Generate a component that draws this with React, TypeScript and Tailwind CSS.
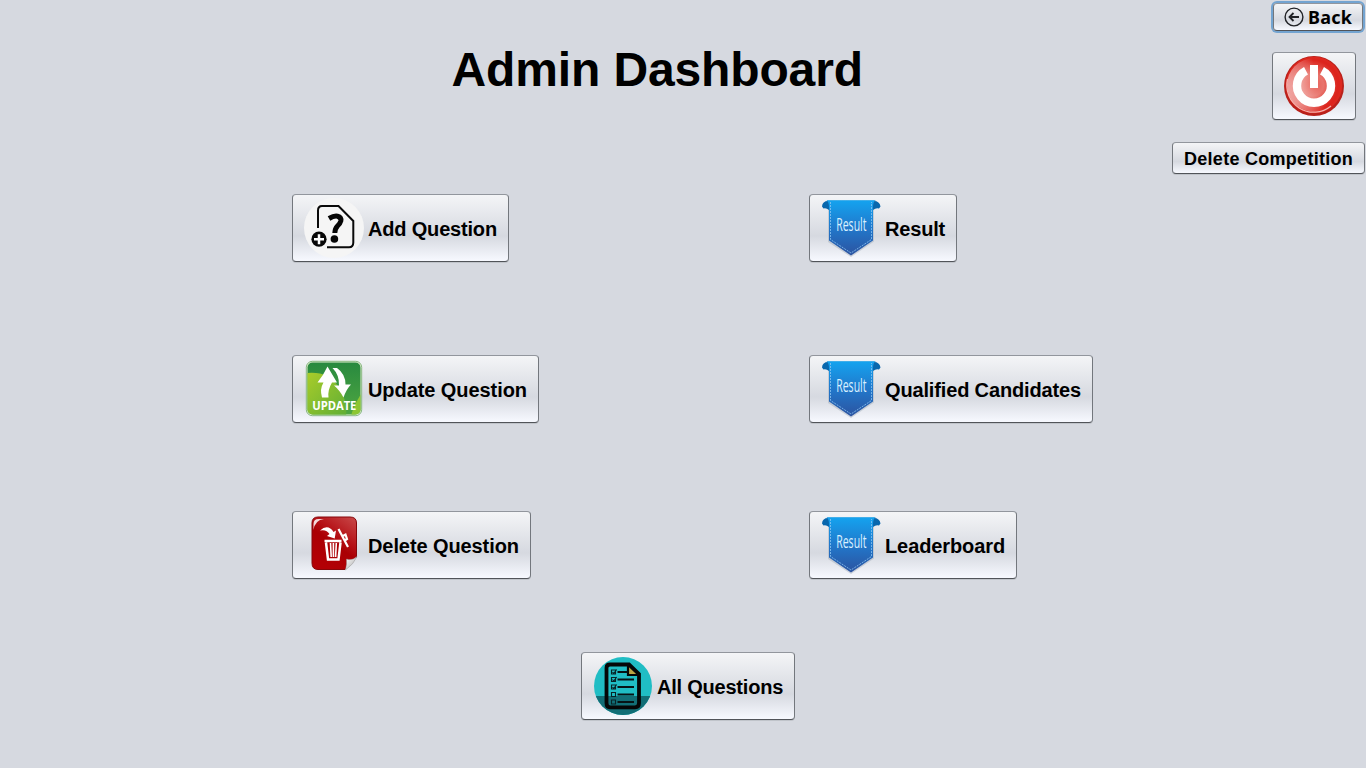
import type { ReactNode } from 'react';

function AddIcon() {
  return (
    <svg width="60" height="60" viewBox="0 0 60 60" className="shrink-0">
      <circle cx="30" cy="30" r="30" fill="#f5f5f5" />
      <path d="M14 30V12.500Q14 8 18 8H34.500L49.300 23V44.500Q49.300 49.300 45 49.300H23" fill="none" stroke="#0a0a0a" strokeWidth="2" />
      <path d="M25 20.500Q30 17.500 33.500 18.200Q37.500 19.200 36.800 23Q36.200 25.500 33.500 28Q31 30.500 30.800 35" fill="none" stroke="#050505" strokeWidth="5" />
      <circle cx="30.400" cy="41" r="3.800" fill="#050505" />
      <circle cx="15" cy="41.200" r="7.600" fill="#080808" />
      <path d="M15 36.200v10M10 41.200h10" stroke="#fff" strokeWidth="2.500" />
    </svg>
  );
}

function UpdateIcon() {
  return (
    <svg width="60" height="60" viewBox="0 0 60 60" className="shrink-0">
      <defs>
        <linearGradient id="updateDark" x1="0" y1="0" x2="0" y2="1">
          <stop offset="0" stopColor="#28893f" />
          <stop offset="1" stopColor="#4fa741" />
        </linearGradient>
        <linearGradient id="updateLime" x1="0" y1="0" x2="1" y2="1">
          <stop offset="0" stopColor="#a9cc2a" />
          <stop offset="1" stopColor="#5fae35" />
        </linearGradient>
        <clipPath id="updateClip"><rect x="3.500" y="3.500" width="53" height="52" rx="5" /></clipPath>
      </defs>
      <rect x="2.300" y="2.300" width="55.400" height="54.400" rx="6" fill="#e4efd2" stroke="#70aa6b" strokeWidth=".8" />
      <g clipPath="url(#updateClip)">
        <rect x="3" y="3" width="54" height="53" fill="url(#updateDark)" />
        <path d="M3 14Q24 12 34 27Q44 42 42 57H3Z" fill="url(#updateLime)" />
        <path d="M57 35Q49 48 47 57H57Z" fill="#8dc633" />
      </g>
      <path d="M23.500 7.500L33 23.500H28Q23.500 31 24.500 38.500H18Q15.500 30 19.500 23.500H13.500Q19.500 16 23.500 7.500Z" fill="#fff" />
      <path d="M28.500 9H33Q41.500 15 41.500 25.500H47Q42.500 30 39.500 38.500Q35.500 31 30 26.500H35Q35.500 16 28.500 9Z" fill="#fff" />
      <text x="8.300" y="51" textLength="44" lengthAdjust="spacingAndGlyphs" fill="#fff" className="font-['Open_Sans',sans-serif] text-[12px] font-bold">UPDATE</text>
    </svg>
  );
}

function DeleteIcon() {
  return (
    <svg width="60" height="60" viewBox="0 0 60 60" className="shrink-0">
      <defs>
        <linearGradient id="deleteRed" x1="1" y1="0" x2=".4" y2="1">
          <stop offset="0" stopColor="#c94b4b" />
          <stop offset=".42" stopColor="#b61318" />
          <stop offset=".6" stopColor="#aa0004" />
          <stop offset="1" stopColor="#b30005" />
        </linearGradient>
        <linearGradient id="deleteFold" x1="0" y1="0" x2="1" y2="1">
          <stop offset="0" stopColor="#fff" />
          <stop offset="1" stopColor="#a9a9a9" />
        </linearGradient>
      </defs>
      <path d="M14 2H46Q52.500 2 52.500 8V42L41 54.500H14Q8 54.500 8 48V8Q8 2 14 2Z" fill="url(#deleteRed)" stroke="#86070a" />
      <path d="M9.500 15V9Q9.500 4 14.500 4H20Q11 5 9.500 15Z" fill="#fff" opacity=".85" />
      <path d="M41.500 55Q43 49 42.500 44Q48 46 53 41.500Q50 49 41.500 55Z" fill="url(#deleteFold)" stroke="#888" strokeWidth=".4" />
      <path d="M16 15.500Q24 8.500 29.500 17L32 15.500L30.700 23.500L23 21L25.500 19Q22.500 14 16 15.500Z" fill="#fff" />
      <path d="M34.500 14L44 32M38 21.500L41.500 19.500L43 24L40 26" fill="none" stroke="#fff" strokeWidth="2.200" />
      <path d="M20.500 26H37.500M22 27.500L24 44.500H34.500L36.500 27.500" fill="none" stroke="#fff" strokeWidth="2.500" />
      <path d="M26.500 28L27.200 42M29.400 28V42M32.300 28L31.600 42" stroke="#fff" strokeWidth="1.600" />
    </svg>
  );
}

function ResultIcon() {
  return (
    <svg width="60" height="60" viewBox="0 0 60 60" className="shrink-0">
      <defs>
        <linearGradient id="ribbonBlue" x1="0" y1="0" x2="0" y2="1">
          <stop offset="0" stopColor="#14a3ef" />
          <stop offset=".5" stopColor="#2178cb" />
          <stop offset="1" stopColor="#2c53a0" />
        </linearGradient>
      </defs>
      <path d="M6 2H55L53 12V43.500L30 59L7 44V12Z" fill="#a8b1bd" opacity=".5" />
      <path d="M8 3Q1.500 2.500 1 8.500L2.500 10.500Q5 9.500 8 12Z" fill="#0867ad" />
      <path d="M52 3Q58.500 2.500 59.500 8.500L58 10.500Q55 9.500 52 12Z" fill="#0867ad" />
      <path d="M5.500 2.300H54.500Q52 4 52 9V42.500L30 57.500L8 42.500V9Q8 4 5.500 2.300Z" fill="url(#ribbonBlue)" />
      <path d="M9.500 4V41.500L30 55L50.500 41.500V4" fill="none" stroke="#8bc5f3" strokeWidth=".8" strokeDasharray="2 1" />
      <g transform="translate(15.200 32.800) scale(.61 1)">
        <text fill="#d9f0ff" className="font-['Open_Sans',sans-serif] text-[17.300px] font-normal tracking-normal">Result</text>
      </g>
    </svg>
  );
}

function QuestionsIcon() {
  return (
    <svg width="60" height="60" viewBox="0 0 60 60" className="shrink-0">
      <defs><clipPath id="questionsClip"><circle cx="30" cy="30" r="29" /></clipPath></defs>
      <g clipPath="url(#questionsClip)">
        <rect width="60" height="60" fill="#20bdc4" />
        <rect y="40" width="60" height="20" fill="#126e76" />
      </g>
      <path d="M35 8V19H45Z" fill="#b9a544" />
      <path d="M17 8.500H36L46 18V47Q46 51.300 42 51.300H17Q13.500 51.300 13.500 47V12Q13.500 8.500 17 8.500Z" fill="none" stroke="#050707" strokeWidth="3.800" />
      <path d="M35 9V19H45" fill="none" stroke="#050707" strokeWidth="2.200" />
      <path d="M24.500 16H34.500M24.500 23.500H41M24.500 31H41M24.500 38.500H41M24.500 46H41" stroke="#071416" strokeWidth="1.800" />
      <path d="M18.500 14h4v4h-4zM18.500 21.500h4v4h-4zM18.500 29h4v4h-4zM18.500 36.500h4v4h-4zM18.500 44h4v4h-4zM19.500 16l1.200 1.500 3-4M19.500 23.500l1.200 1.500 3-4M19.500 31l1.200 1.500 3-4" fill="none" stroke="#082326" strokeWidth="1.100" />
    </svg>
  );
}

function PowerIcon() {
  return (
    <svg width="60" height="60" viewBox="0 0 60 60" className="shrink-0">
      <defs>
        <radialGradient id="powerRed" cx=".48" cy=".5" r=".52">
          <stop offset="0" stopColor="#e85b52" />
          <stop offset=".4" stopColor="#e8746c" />
          <stop offset=".9" stopColor="#dc251d" />
          <stop offset="1" stopColor="#dc241d" />
        </radialGradient>
        <linearGradient id="powerShine" x1="0" y1=".6" x2=".6" y2=".45">
          <stop offset="0" stopColor="#fff" stopOpacity=".6" />
          <stop offset="1" stopColor="#fff" stopOpacity="0" />
        </linearGradient>
      </defs>
      <circle cx="30" cy="30" r="30" fill="#b9211b" />
      <circle cx="30" cy="29" r="28.300" fill="#dd281f" />
      <circle cx="29.500" cy="29" r="26.500" fill="url(#powerRed)" />
      <circle cx="29.500" cy="29" r="26.500" fill="url(#powerShine)" />
      <path d="M3.500 23A27 27 0 0 0 47 50" fill="none" stroke="#f4b5b0" strokeWidth="1.200" />
      <path d="M22 14.700A17 17 0 1 0 38 14.700" fill="none" stroke="#fff" strokeWidth="8.400" />
      <path d="M26 9H34V32H26Z" fill="#fff" />
    </svg>
  );
}

const face =
  "flex shrink-0 items-center rounded-[4px] border border-t-[#92969d] border-x-[#73777d] border-b-[#515459] bg-linear-to-b from-[#f4f5f7] via-[#d6d9e0] via-62% to-[#f7f9ff] text-black whitespace-nowrap font-['Liberation_Sans',Arial,sans-serif] font-bold";

function MenuButton({ icon, label, className }: { icon: ReactNode; label: string; className: string }) {
  return (
    <button className={`${face} h-[68px] gap-1 pl-[11px] text-[20px] shadow-[0_1px_0_#c0c4ca] ${className}`}>
      {icon}
      <span className="pt-[2px]">{label}</span>
    </button>
  );
}

export default function App() {
  return (
    <div className="flex h-[768px] w-[1366px] overflow-hidden bg-[#d6d9e0] font-['Liberation_Sans',Arial,sans-serif]">
      <main className="flex w-[1172px] flex-col">
        <h1 className="mt-[43px] ml-[451.500px] h-[53px] text-[48px] leading-[54px] font-bold tracking-[-0.13px] whitespace-nowrap text-black">Admin Dashboard</h1>
        <div className="mt-[98px] ml-[292px] grid grid-cols-[517px_284px] grid-rows-[161px_156px_68px] items-start">
          <MenuButton icon={<AddIcon />} label="Add Question" className="w-[217px] tracking-[-0.18px]" />
          <MenuButton icon={<ResultIcon />} label="Result" className="w-[148px] tracking-[-0.18px]" />
          <MenuButton icon={<UpdateIcon />} label="Update Question" className="w-[247px] tracking-[-0.07px]" />
          <MenuButton icon={<ResultIcon />} label="Qualified Candidates" className="w-[284px] tracking-[-0.15px]" />
          <MenuButton icon={<DeleteIcon />} label="Delete Question" className="w-[239px] tracking-[-0.09px]" />
          <MenuButton icon={<ResultIcon />} label="Leaderboard" className="w-[208px] tracking-[-0.1px]" />
        </div>
        <div className="mt-[73px] ml-[581px]">
          <MenuButton icon={<QuestionsIcon />} label="All Questions" className="w-[214px] tracking-[-0.22px]" />
        </div>
      </main>
      <aside className="flex w-[194px] flex-col">
        <button className={`${face} mt-[3px] ml-[101px] h-[28px] w-[90px] pl-[10px] ring-2 ring-[#73a4d1]`}>
          <svg width="20" height="20" viewBox="0 0 20 20" fill="none" stroke="#202226" className="mb-px shrink-0">
            <circle cx="10" cy="10" r="8.900" strokeWidth="1.400" />
            <path d="M15 10H6M9.500 6L5.500 10L9.500 14" strokeWidth="1.800" />
          </svg>
          <span className="ml-[4px] font-['Noto_Sans','Open_Sans',sans-serif] text-[18px] leading-[26px] tracking-[0.2px]">Back</span>
        </button>
        <button aria-label="Power" className={`${face} mt-[21px] ml-[100px] h-[68px] w-[84px] pl-[11px] shadow-[0_1px_0_#c0c4ca]`}>
          <PowerIcon />
        </button>
        <button className={`${face} mt-[22px] h-[32px] w-[193px] pt-[2px] pl-[11px] text-[18px] tracking-[0.28px] shadow-[0_1px_0_#c0c4ca]`}>Delete Competition</button>
      </aside>
    </div>
  );
}
